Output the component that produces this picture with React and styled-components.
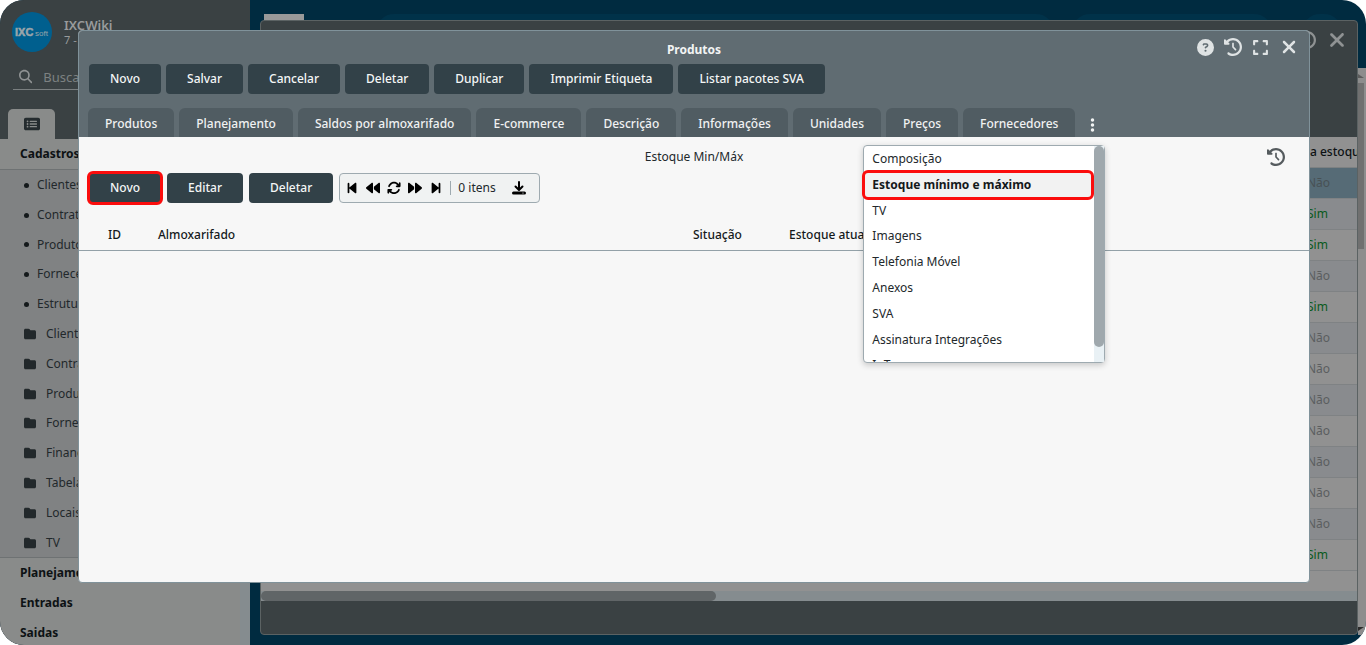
import React from "react";
import styled, { createGlobalStyle } from "styled-components";
import {
  FaArrowsRotate,
  FaBackward,
  FaBackwardStep,
  FaCircleQuestion,
  FaClockRotateLeft,
  FaEllipsisVertical,
  FaExpand,
  FaFolder,
  FaForward,
  FaForwardStep,
  FaMagnifyingGlass,
  FaRectangleList,
  FaXmark,
} from "react-icons/fa6";

const GlobalStyle = createGlobalStyle`
  * { box-sizing: border-box; }
  body { margin: 0; background: #fff; overflow: hidden; }
  body, button, input { font-family: "Noto Sans", sans-serif; font-size: 12px; }
  button { margin: 0; padding: 0; border: 0; background: none; color: inherit; cursor: pointer; }
  svg { display: block; }
`;

const Desktop = styled.div`
  position: relative;
  display: flex;
  height: 100vh;
  border-radius: 24px;
  overflow: hidden;
  background: #002b40;
  color: #14191b;
  line-height: 16px;
`;

/* Sidebar */
const Sidebar = styled.aside`
  display: flex;
  flex-direction: column;
  width: 250px;
  flex: none;
  background: #3a4143;
  & > * { flex-shrink: 0; }
`;
const Account = styled.div`
  display: flex;
  gap: 12px;
  padding: 12px 12px 0;
  color: #989b9c;
`;
const AccountName = styled.div`
  padding-top: 5px;
  font-size: 13px;
  font-weight: 600;
`;
const AccountId = styled.div`
  font-size: 11px;
  font-weight: 400;
  line-height: 14px;
`;
const Search = styled.label`
  display: flex;
  align-items: center;
  gap: 11px;
  height: 26px;
  margin: 12px 13px 0;
  padding: 0 6px;
  border-bottom: 1px solid #7a7f80;
  color: #8f9293;
`;
const SearchInput = styled.input`
  width: 100%;
  border: 0;
  outline: 0;
  padding: 0;
  background: transparent;
  font-size: 13px;
  &::placeholder { color: #7d8182; opacity: 1; }
`;
const SideTab = styled.button`
  display: flex;
  align-items: center;
  justify-content: center;
  width: 47px;
  height: 30px;
  margin: 19px 8px 0;
  border-radius: 5px 5px 0 0;
  background: #898b8a;
  color: #252c2f;
`;
const Menu = styled.nav`
  flex: 1;
  background: #898b8a;
  border-right: 10px solid #858c8f;
`;
const Section = styled.a`
  display: block;
  padding: 7px 20px;
  color: #0d1214;
  font-weight: 700;
  line-height: 16px;
  text-decoration: none;
`;
const SubList = styled.ul`
  margin: 0;
  padding: 0;
  list-style: none;
  border: solid #6e7273;
  border-width: 1px 0;
  background: #808283;
`;
const SubLink = styled.a`
  display: flex;
  align-items: center;
  gap: ${(p) => (p.$folder ? "10px" : "8px")};
  height: 30px;
  padding-left: 24px;
  color: #22282b;
  text-decoration: none;
`;
const SubItem = styled.li`
  &:nth-child(5n + 3) a { height: 29px; }
`;
const Dot = styled.span`
  width: 5px;
  height: 5px;
  border-radius: 50%;
  background: #14191b;
`;

/* Main area behind the dialog */
const Main = styled.main`
  position: relative;
  flex: 1;
  min-width: 0;
  padding: 14px 0 0 14px;
`;
const TopBar = styled.div`
  display: flex;
  height: 12px;
  padding-right: 24px;
`;
const Brand = styled.div`
  width: 40px;
  background: #999;
`;
const Pill = styled.div`
  flex: ${(p) => p.$flex};
  margin-left: ${(p) => p.$gap};
  height: 36px;
  border-radius: 18px;
  background: #003249;
`;
const PageScroll = styled.div`
  position: absolute;
  top: 68px;
  right: 0;
  bottom: 10px;
  display: flex;
  flex-direction: column;
  justify-content: space-between;
  width: 8px;
  padding: 6px 2px 4px 0;
  background: #8d8d8d;
`;
const ScrollArrow = styled.span`
  height: 4px;
  margin-bottom: ${(p) => (p.$up ? "5px" : "0")};
  background: ${(p) => (p.$up ? "#5c5c5c" : "#2b2b2b")};
  clip-path: ${(p) => (p.$up ? "polygon(0 0, 100% 100%, 0 100%)" : "polygon(0 0, 100% 0, 0 100%)")};
`;
const PageThumb = styled.div`
  height: 166px;
  margin-bottom: auto;
  background: #707070;
`;
const BackWindow = styled.section`
  position: absolute;
  inset: 20px 8px 10px 10px;
  display: flex;
  flex-direction: column;
  overflow: hidden;
  border: 1px solid #5b6263;
  border-radius: 4px;
  background: #3a4143;
`;
const BackHead = styled.div`
  display: flex;
  justify-content: flex-end;
  gap: 10px;
  flex: none;
  height: 116px;
  padding: 8px 9px;
  color: #8f9293;
`;
const BackTool = styled.button`
  display: flex;
  align-items: center;
  height: 22px;
`;
const BackBody = styled.div`
  flex: 1;
  overflow: hidden;
  background: #919191;
`;
const BackTable = styled.table`
  width: 100%;
  border-collapse: collapse;
  table-layout: fixed;
`;
const BackTh = styled.th`
  width: ${(p) => (p.$last ? "51px" : "auto")};
  height: 30px;
  padding: 0 0 0 4px;
  overflow: hidden;
  border-bottom: 1px solid #7d8182;
  color: #0d1214;
  font-weight: 500;
  text-align: left;
  white-space: nowrap;
`;
const BackRow = styled.tr`
  height: 31px;
  color: ${(p) => (p.$selected ? "#485155" : "#5b5e60")};
  background: ${(p) => (p.$selected ? "#566b76" : p.$alt ? "#898b8e" : "#919191")};
`;
const BackTd = styled.td`
  padding: 0 0 0 1px;
  border-bottom: 1px solid #7f8284;
  color: ${(p) => (p.$yes ? "#0a5a1c" : "inherit")};
`;
const HScroll = styled.div`
  flex: none;
  height: 10px;
  background: #858c8f;
`;
const HThumb = styled.div`
  width: 41.5%;
  height: 10px;
  border-radius: 5px;
  background: #606567;
`;
const BackFoot = styled.div`
  flex: none;
  height: 33px;
`;

/* Dialog */
const Dialog = styled.section`
  position: absolute;
  inset: 30px 56px 62px 78px;
  display: flex;
  flex-direction: column;
  border: 1px solid #80929a;
  border-radius: 4px;
  background: #f7f7f7;
`;
const DialogHead = styled.header`
  flex: none;
  border-radius: 3px 3px 0 0;
  background: #606c72;
  color: #f2f4f4;
`;
const TitleBar = styled.div`
  display: grid;
  grid-template-columns: 1fr auto 1fr;
  height: 33px;
  padding: 0 10px;
`;
const Title = styled.h1`
  grid-column: 2;
  margin: 0;
  padding-top: 11px;
  font-size: 12px;
  font-weight: 700;
  line-height: 16px;
`;
const WindowTools = styled.div`
  display: flex;
  align-items: center;
  justify-content: flex-end;
  gap: 10px;
  padding-bottom: 1px;
  color: #dfe3e4;
`;
const ActionRow = styled.div`
  display: flex;
  align-items: center;
  gap: ${(p) => p.$gap};
  padding: 0 10px;
`;
const Action = styled.button`
  height: 30px;
  padding: 0 21px 2px;
  border-radius: 4px;
  background: #324148;
  color: #f4f6f6;
  font-weight: 500;
  outline: ${(p) => (p.$marked ? "3px solid #fb0d0d" : "0")};
  outline-offset: -1px;
`;
const Tabs = styled.div`
  display: flex;
  gap: 5px;
  padding: 14px 9px 0;
`;
const Tab = styled.button`
  height: 29px;
  padding: 2px 17px 0;
  border-radius: 6px 6px 0 0;
  background: #505c62;
  color: #f0f2f2;
  font-weight: 500;
  white-space: nowrap;
`;
const More = styled.div`
  position: relative;
  margin-left: 5px;
`;
const MoreButton = styled.button`
  width: 15px;
  height: 29px;
  padding: 5px 0 0;
  display: flex;
  align-items: center;
  justify-content: center;
`;
const Dropdown = styled.div`
  position: absolute;
  z-index: 2;
  top: 37px;
  right: -5px;
  display: flex;
  width: 242px;
  height: 218px;
  border: 1px solid #9eaab0;
  border-radius: 4px;
  background: #fff;
  box-shadow: 0 2px 6px rgba(0, 0, 0, 0.2);
`;
const Options = styled.div`
  flex: 1;
  margin-left: -2px;
  overflow: hidden;
`;
const Option = styled.button`
  display: block;
  width: 100%;
  height: 26px;
  padding: 0 10px;
  color: #22282b;
  text-align: left;
  border-radius: 6px;
  line-height: 16px;
  &:nth-child(5n + 3) { height: 25px; }
  ${(p) =>
    p.$active &&
    `
    height: 30px;
    margin: -2px 0;
    border: 3px solid #fb0d0d;
    padding: 0 7px;
    background: #f2f2f2;
    color: #14191b;
    font-weight: 700;
  `}
`;
const Rail = styled.div`
  width: 10px;
  background: #e9f1f5;
`;
const RailThumb = styled.div`
  height: 201px;
  border-radius: 5px;
  background: #9fa8ad;
`;

const SubHead = styled.div`
  display: grid;
  grid-template-columns: 1fr auto 1fr;
  align-items: center;
  height: 36px;
  padding: 4px 24px 0;
  color: #22282b;
`;
const HistoryButton = styled.button`
  grid-column: 3;
  justify-self: end;
  color: #555b5e;
`;
const SubTitle = styled.span`
  grid-column: 2;
`;
const Pager = styled.div`
  display: flex;
  align-items: center;
  width: 201px;
  height: 30px;
  padding: 0 8px 0 5px;
  gap: 7px;
  border: 1px solid #9eaab0;
  border-radius: 4px;
  background: #f0f2f2;
  color: #000;
`;
const Count = styled.span`
  flex: 1;
  padding-left: 7px;
  border-left: 1px solid #9eaab0;
  line-height: 14px;
  color: #22282b;
`;
const DownloadButton = styled.button`
  padding-right: 5px;
`;
const Grid = styled.table`
  width: 100%;
  margin-top: 16px;
  border-collapse: collapse;
  table-layout: fixed;
`;
const Th = styled.th`
  width: ${(p) => p.$w};
  height: 31px;
  padding: 1px 0 0 ${(p) => p.$pad || "0"};
  border-bottom: 1px solid #93a1a8;
  color: #14191b;
  font-weight: 500;
  text-align: left;
`;

const Logo = () => (
  <svg width="40" height="40" viewBox="0 0 40 40" role="img" aria-label="IXC Soft">
    <circle cx="20" cy="20" r="20" fill="#005f8e" />
    <text x="3" y="24" fill="#9ba5aa" stroke="#9ba5aa" strokeWidth="0.500" fontFamily="Liberation Sans, sans-serif" fontSize="11" fontWeight="700">IXC</text>
    <text x="23" y="24" fill="#9ba5aa" fontFamily="Liberation Sans, sans-serif" fontSize="8">soft</text>
  </svg>
);

const DownloadIcon = () => (
  <svg width="14" height="14" viewBox="0 0 14 14" fill="none" stroke="#000" strokeWidth="2" strokeLinecap="round" strokeLinejoin="round">
    <path d="M7 1v7M3.500 5.500 7 9l3.500-3.500" />
    <path d="M1.500 12h11" strokeWidth="3" />
    <circle cx="11" cy="12" r="0.600" fill="#fff" stroke="none" />
  </svg>
);

const links = ["Clientes", "Contratos", "Produtos", "Fornecedores", "Estrutura"];
const folders = ["Clientes", "Contratos", "Produtos", "Fornecedores", "Financeiro", "Tabelas", "Locais", "TV"];
const actions = ["Novo", "Salvar", "Cancelar", "Deletar", "Duplicar", "Imprimir Etiqueta", "Listar pacotes SVA"];
const tabs = ["Produtos", "Planejamento", "Saldos por almoxarifado", "E-commerce", "Descrição", "Informações", "Unidades", "Preços", "Fornecedores"];
const options = ["Composição", "Estoque mínimo e máximo", "TV", "Imagens", "Telefonia Móvel", "Anexos", "SVA", "Assinatura Integrações", "IoT"];
const stock = ["Não", "Sim", "Sim", "Não", "Sim", "Não", "Não", "Não", "Não", "Não", "Não", "Não", "Sim"];

export default function App() {
  return (
    <Desktop>
      <GlobalStyle />
      <Sidebar>
        <Account>
          <Logo />
          <AccountName>
            IXCWiki
            <AccountId>7 -</AccountId>
          </AccountName>
        </Account>
        <Search>
          <FaMagnifyingGlass size={15} />
          <SearchInput type="search" aria-label="Buscar" placeholder="Buscar" />
        </Search>
        <SideTab aria-label="Menu"><FaRectangleList size={16} /></SideTab>
        <Menu>
          <Section href="#cadastros">Cadastros</Section>
          <SubList>
            {links.map((t) => (
              <SubItem key={t}><SubLink href="#item"><Dot />{t}</SubLink></SubItem>
            ))}
            {folders.map((t) => (
              <SubItem key={t}><SubLink $folder href="#pasta"><FaFolder size={12} />{t}</SubLink></SubItem>
            ))}
          </SubList>
          <Section href="#planejamento">Planejamento</Section>
          <Section href="#entradas">Entradas</Section>
          <Section href="#saidas">Saidas</Section>
        </Menu>
      </Sidebar>

      <Main>
        <TopBar>
          <Brand />
          <Pill $flex="680" $gap="72px" />
          <Pill $flex="200" $gap="18px" />
          <Pill $flex="0 0 40px" $gap="30px" />
        </TopBar>
        <PageScroll>
          <ScrollArrow $up />
          <PageThumb />
          <ScrollArrow />
        </PageScroll>
        <BackWindow>
          <BackHead>
            <BackTool aria-label="Histórico"><FaClockRotateLeft size={18} /></BackTool>
            <BackTool aria-label="Fechar"><FaXmark size={22} /></BackTool>
          </BackHead>
          <BackBody>
            <BackTable>
              <thead>
                <tr><BackTh /><BackTh $last>a estoque</BackTh></tr>
              </thead>
              <tbody>
                {stock.map((v, i) => (
                  <BackRow key={i} $selected={i === 0} $alt={i % 2 === 1}>
                    <BackTd />
                    <BackTd $yes={v === "Sim"}>{v}</BackTd>
                  </BackRow>
                ))}
              </tbody>
            </BackTable>
          </BackBody>
          <HScroll><HThumb /></HScroll>
          <BackFoot />
        </BackWindow>
      </Main>

      <Dialog role="dialog" aria-labelledby="dialog-title">
        <DialogHead>
          <TitleBar>
            <Title id="dialog-title">Produtos</Title>
            <WindowTools>
              <button aria-label="Ajuda"><FaCircleQuestion size={17} /></button>
              <button aria-label="Histórico"><FaClockRotateLeft size={18} /></button>
              <button aria-label="Expandir"><FaExpand size={17} /></button>
              <button aria-label="Fechar"><FaXmark size={20} /></button>
            </WindowTools>
          </TitleBar>
          <ActionRow $gap="5px">
            {actions.map((t) => <Action key={t}>{t}</Action>)}
          </ActionRow>
          <Tabs>
            {tabs.map((t) => <Tab key={t}>{t}</Tab>)}
            <More>
              <MoreButton aria-label="Mais abas"><FaEllipsisVertical size={16} /></MoreButton>
              <Dropdown>
                <Options>
                  {options.map((t, i) => <Option key={t} $active={i === 1}>{t}</Option>)}
                </Options>
                <Rail><RailThumb /></Rail>
              </Dropdown>
            </More>
          </Tabs>
        </DialogHead>
        <SubHead>
          <SubTitle>Estoque Min/Máx</SubTitle>
          <HistoryButton aria-label="Histórico"><FaClockRotateLeft size={18} /></HistoryButton>
        </SubHead>
        <ActionRow $gap="6px">
          <Action $marked>Novo</Action>
          <Action>Editar</Action>
          <Action>Deletar</Action>
          <Pager>
            <button aria-label="Primeira"><FaBackwardStep size={14} /></button>
            <button aria-label="Anterior"><FaBackward size={14} /></button>
            <button aria-label="Atualizar"><FaArrowsRotate size={14} /></button>
            <button aria-label="Próxima"><FaForward size={14} /></button>
            <button aria-label="Última"><FaForwardStep size={14} /></button>
            <Count>0 itens</Count>
            <DownloadButton aria-label="Baixar"><DownloadIcon /></DownloadButton>
          </Pager>
        </ActionRow>
        <Grid>
          <thead>
            <tr>
              <Th $w="79px" $pad="29px">ID</Th>
              <Th $w="535px">Almoxarifado</Th>
              <Th $w="96px">Situação</Th>
              <Th>Estoque atual</Th>
            </tr>
          </thead>
        </Grid>
      </Dialog>
    </Desktop>
  );
}
